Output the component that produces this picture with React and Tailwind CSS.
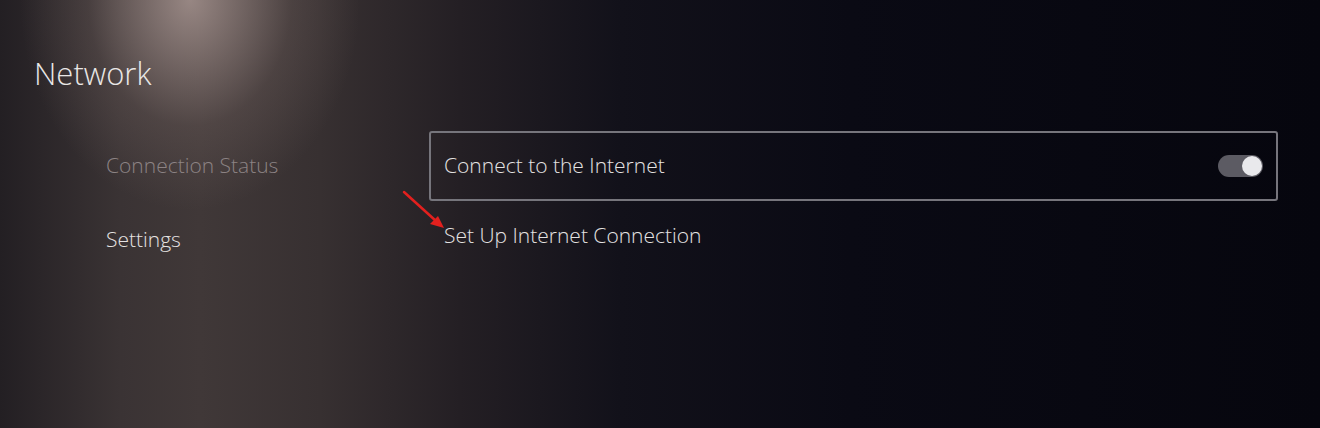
import React from 'react';

const font = { fontFamily: '"Open Sans", "Noto Sans", sans-serif' };

const Toggle = ({ on }) => (
  <div className={`flex h-[22px] w-[45px] items-center rounded-full bg-[#5c5b63] px-[1px] ${on ? 'justify-end' : 'justify-start'}`}>
    <div className="h-[20px] w-[20px] rounded-full bg-[#e9e9ec]" />
  </div>
);

const Arrow = () => (
  <svg className="pointer-events-none absolute left-[400px] top-[188px]" width="50" height="46" viewBox="0 0 50 46">
    <line x1="4" y1="4" x2="36" y2="33" stroke="#e3201e" strokeWidth="2.5" strokeLinecap="round" />
    <polygon points="44,40 30,36 38,28" fill="#e3201e" />
  </svg>
);

export default function App() {
  return (
    <div
      className="relative h-[428px] w-full overflow-hidden bg-[radial-gradient(ellipse_170px_210px_at_190px_0px,rgba(185,165,160,0.72),rgba(130,112,108,0.25)_60%,transparent),linear-gradient(to_right,#231f23_0px,#3a3334_120px,#403838_200px,#373031_320px,#241f24_460px,#12111a_620px,#0a0a14_850px,#06060e_1320px)] text-[#e9e7e6]"
      style={font}
    >
      <div className="pl-[34px] pt-[53px]">
        <h1 className="text-[31px] font-light leading-[40px]">Network</h1>
      </div>

      <div className="mt-[38px] flex pl-[106px]">
        <nav className="flex w-[323px] flex-col">
          <div className="flex h-[70px] items-center text-[21px] font-light text-[#8c8384]">Connection Status</div>
          <div className="flex h-[78px] items-center text-[21px] font-light text-[#e6e3e2]">Settings</div>
        </nav>

        <section className="flex w-[849px] flex-col">
          <div className="flex h-[70px] items-center justify-between rounded-[3px] border-2 border-[#76757c] pl-[13px] pr-[13px]">
            <span className="text-[21px] font-light text-[#e4e2e2]">Connect to the Internet</span>
            <Toggle on />
          </div>
          <div className="flex h-[70px] items-center pl-[15px] text-[21px] font-light text-[#e4e2e2]">
            <span>Set Up Internet Connection</span>
          </div>
        </section>
      </div>

      <Arrow />
    </div>
  );
}
